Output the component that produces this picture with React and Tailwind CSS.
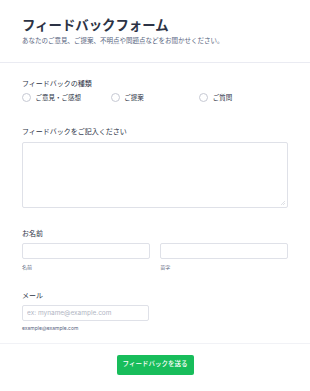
import React from "react";

const font = { fontFamily: 'Inter, "Noto Sans CJK JP", sans-serif' };

export default function App() {
  const types = ["ご意見・ご感想", "ご提案", "ご質問"];

  return (
    <div className="min-h-screen w-[310px] bg-white text-[#2c3345]" style={font}>
      <div className="border-b border-[#eaebf2] px-[22px] pt-[17px] pb-[16px]">
        <h1 className="text-[13.4px] font-bold leading-[16px] text-[#2c3345]">
          フィードバックフォーム
        </h1>
        <p className="mt-[3.5px] text-[6.5px] leading-[9px] text-[#57647e]">
          あなたのご意見、ご提案、不明点や問題点などをお聞かせください。
        </p>
      </div>

      <div className="px-[22px] pt-[16px]">
        <label className="block text-[7px] leading-[10px]">
          フィードバックの種類
        </label>
        <div className="mt-[4px] grid grid-cols-3">
          {types.map((t) => (
            <label key={t} className="flex h-[10px] items-center gap-[4.5px]">
              <span className="h-[9px] w-[9px] rounded-full border border-[#c6c9d3] bg-white" />
              <span className="text-[6.5px] leading-[10px]">{t}</span>
            </label>
          ))}
        </div>

        <label className="mt-[24px] block text-[7px] leading-[10px]">
          フィードバックをご記入ください
        </label>
        <div className="relative mt-[5px]">
          <textarea className="block h-[66px] w-full resize-none rounded-[2px] border border-[#dfe1e8] bg-white" />
          <svg
            className="absolute bottom-[3px] right-[3px]"
            width="4"
            height="4"
            viewBox="0 0 4 4"
          >
            <path d="M4 0L0 4M4 2L2 4" stroke="#c9ccd5" strokeWidth="0.6" />
          </svg>
        </div>

        <label className="mt-[21px] block text-[7px] leading-[10px]">
          お名前
        </label>
        <div className="mt-[4px] grid grid-cols-2 gap-[10.5px]">
          <div>
            <input className="block h-[16px] w-full rounded-[2px] border border-[#dfe1e8]" />
            <div className="mt-[5.5px] text-[5px] leading-[7px] text-[#57647e]">名前</div>
          </div>
          <div>
            <input className="block h-[16px] w-full rounded-[2px] border border-[#dfe1e8]" />
            <div className="mt-[5.5px] text-[5px] leading-[7px] text-[#57647e]">苗字</div>
          </div>
        </div>

        <label className="mt-[19.5px] block text-[7px] leading-[10px]">
          メール
        </label>
        <input
          placeholder="ex: myname@example.com"
          className="mt-[4px] block h-[16px] w-[127px] rounded-[2px] border border-[#dfe1e8] px-[4px] text-[6.5px] placeholder:text-[#b1b5c3]"
        />
        <div className="mt-[4.5px] text-[5px] leading-[7px] text-[#57647e]">
          example@example.com
        </div>
      </div>

      <div className="mt-[10.5px] flex justify-center border-t border-[#f1f2f6] pt-[11px]">
        <button className="h-[20px] w-[77px] rounded-[2px] bg-[#18bd5b] text-[6.5px] font-medium text-white">
          フィードバックを送る
        </button>
      </div>
    </div>
  );
}
